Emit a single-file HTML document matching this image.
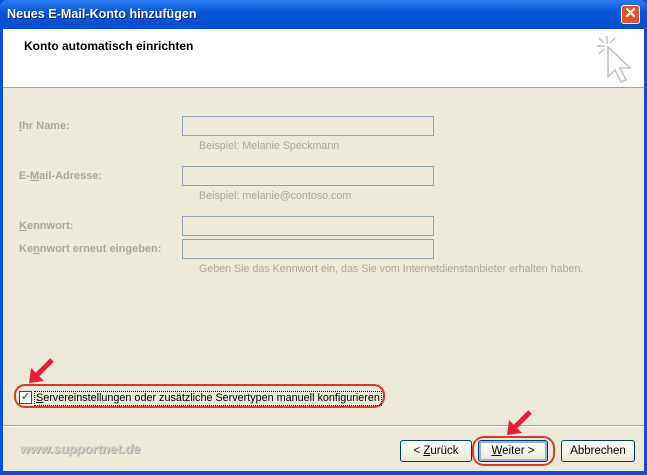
<!DOCTYPE html>
<html><head><style>
body{margin:0;width:647px;height:475px;overflow:hidden;font-family:Tahoma,"DejaVu Sans","Liberation Sans",sans-serif;font-size:11px;position:relative;background:#0a4fd8}
.a{position:absolute}
#title{left:0;top:0;width:647px;height:29px;background:linear-gradient(#2d7cf0,#0a56d8 40%,#0550d0);border-radius:7px 7px 0 0}
#tt{left:7px;top:7px;color:#fff;font-weight:bold;font-size:12.6px;font-family:"Liberation Sans",sans-serif;text-shadow:1px 1px #0a246a}
#x{left:621px;top:5px;width:19px;height:19px;background:#e0532f;border:1px solid #fff;border-radius:3px;box-sizing:border-box;color:#fff;text-align:center;font:bold 15px/16px "Liberation Sans",sans-serif}
#body{left:3px;top:29px;width:641px;height:442px;background:#ece9d8}
#hdr{left:3px;top:29px;width:641px;height:58px;background:#fff;border-bottom:1px solid #aca899}
.lbl{color:#aca899;font-weight:bold;font-family:"Liberation Sans",sans-serif;font-size:11px}
.inp{left:182px;width:250px;height:18px;border:1px solid #8fa2b8;background:#ece9d8}
.hint{color:#aca899;font-family:"Liberation Sans",sans-serif;font-size:10.7px}
.btn{top:440px;height:20px;border:1px solid #003c74;border-radius:3px;background:linear-gradient(#fff,#ece9d8);text-align:center;line-height:20px;font-family:"Liberation Sans",sans-serif;font-size:11.5px}
</style></head><body>
<div class="a" id="title"></div>
<div class="a" id="tt">Neues E-Mail-Konto hinzufügen</div>
<div class="a" id="x">✕</div>
<div class="a" id="body"></div>
<div class="a" id="hdr"></div>
<div class="a" style="left:24px;top:39px;font-weight:bold;font-family:'Liberation Sans',sans-serif;font-size:12px">Konto automatisch einrichten</div>
<svg class="a" style="left:595px;top:34px" width="40" height="50"><g stroke="#c0c0c0" stroke-width="1.5" fill="none"><path d="M12 2v8M2 12h8M4 4l5 5M20 4l-5 5M4 20l5-5"/><path d="M13 13l0 30 7-7 6 12 5-2-6-12 10 0z" fill="#fff"/></g></svg>
<div class="a lbl" style="left:19px;top:120px"><u>I</u>hr Name:</div>
<div class="a inp" style="top:116px"></div>
<div class="a hint" style="left:199px;top:140px">Beispiel: Melanie Speckmann</div>
<div class="a lbl" style="left:19px;top:170px">E-<u>M</u>ail-Adresse:</div>
<div class="a inp" style="top:166px"></div>
<div class="a hint" style="left:199px;top:190px">Beispiel: melanie@contoso.com</div>
<div class="a lbl" style="left:19px;top:220px"><u>K</u>ennwort:</div>
<div class="a inp" style="top:216px"></div>
<div class="a lbl" style="left:19px;top:243px">Ke<u>n</u>nwort erneut eingeben:</div>
<div class="a inp" style="top:239px"></div>
<div class="a hint" style="left:199px;top:263px">Geben Sie das Kennwort ein, das Sie vom Internetdienstanbieter erhalten haben.</div>
<svg class="a" style="left:26px;top:352px" width="34" height="34"><path d="M6 28L26 8" stroke="#e2203a" stroke-width="5"/><path d="M3 31L5 16 18 29z" fill="#e2203a"/></svg>
<div class="a" style="left:14px;top:384px;width:371px;height:24px;border:2px solid #d83c24;border-radius:11px;box-sizing:border-box"></div>
<div class="a" style="left:19px;top:391px;width:13px;height:13px;border:1px solid #1c5180;background:#fff;box-sizing:border-box;color:#21a121;font:bold 11px/11px sans-serif;text-align:center">✓</div>
<div class="a" style="left:34px;top:391px;font-family:'Liberation Sans',sans-serif;font-size:10.8px;border:1px dotted #000;padding:0 1px;line-height:13px"><u>S</u>ervereinstellungen oder zusätzliche Servertypen manuell konfigurieren</div>
<div class="a" style="left:3px;top:425px;width:641px;height:1px;background:#aca899;border-bottom:1px solid #fff"></div>
<div class="a" style="left:20px;top:441px;color:#d8d4c4;font-style:italic;font-weight:bold;font-size:13px;font-family:'Liberation Sans',sans-serif;text-shadow:1px 1px #aaa">www.supportnet.de</div>
<svg class="a" style="left:504px;top:404px" width="34" height="34"><path d="M6 28L26 8" stroke="#e2203a" stroke-width="5"/><path d="M3 31L5 16 18 29z" fill="#e2203a"/></svg>
<div class="a btn" style="left:400px;width:70px">&lt; <u>Z</u>urück</div>
<div class="a" style="left:472px;top:436px;width:83px;height:30px;border:2px solid #d83c24;border-radius:12px;box-sizing:border-box"></div>
<div class="a btn" style="left:478px;width:68px;box-shadow:inset 0 0 0 2px #8db2e3"><u>W</u>eiter &gt;</div>
<div class="a btn" style="left:561px;width:72px">Abbrechen</div>
</body></html>
